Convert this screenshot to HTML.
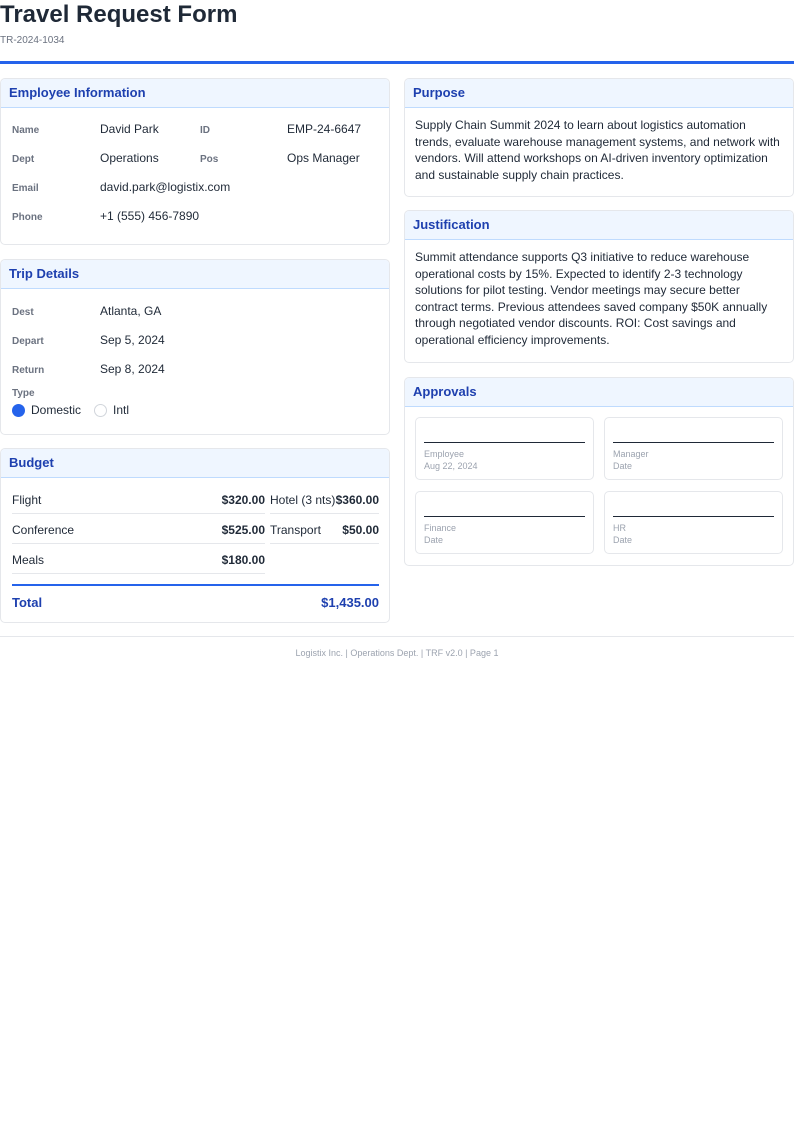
<!DOCTYPE html>
<html><head><meta charset="utf-8"><style>
*{box-sizing:border-box;margin:0;padding:0}
body{width:794px;height:1123px;background:#fff;font-family:"Liberation Sans",Arial,sans-serif;color:#1f2937;position:relative}
.abs{position:absolute}
h1{position:absolute;left:0;top:1px;font-size:24px;font-weight:bold;color:#1f2937}
.sub{left:0;top:35px;font-size:10px;color:#6b7280}
.rule{left:0;top:61px;width:794px;height:3px;background:#2563eb}
.card{position:absolute;border:1px solid #e5e7eb;border-radius:5px;background:#fff;overflow:hidden}
.hd{height:29px;background:#eff6ff;border-bottom:1px solid #bfdbfe;color:#1e40af;font-weight:bold;font-size:13px;padding:6px 0 0 8px}
.lb{position:absolute;font-size:10px;font-weight:bold;color:#6b7280}
.v{position:absolute;font-size:12px;color:#1f2937}
.txt{padding:9px 10px 0 10px;font-size:12px;line-height:16.6px}
.br{position:absolute;height:1px;background:#e5e7eb}
.b{position:absolute;font-size:12px;font-weight:bold;text-align:right}
.sig{position:absolute;width:179px;height:63px;border:1px solid #e5e7eb;border-radius:5px}
.sig .ln{position:absolute;left:8px;right:8px;top:24px;height:1px;background:#1f2937}
.sig .t{position:absolute;left:8px;top:30px;font-size:9px;line-height:12px;color:#9ca3af}
</style></head><body>
<h1>Travel Request Form</h1>
<div class="abs sub">TR-2024-1034</div>
<div class="abs rule"></div>

<div class="card" style="left:0px;top:78px;width:390px;height:167px">
<div class="hd">Employee Information</div>
<div class="lb" style="left:11px;top:46px">Name</div><div class="v" style="left:99px;top:43px">David Park</div>
<div class="lb" style="left:199px;top:46px">ID</div><div class="v" style="left:286px;top:43px">EMP-24-6647</div>
<div class="lb" style="left:11px;top:75px">Dept</div><div class="v" style="left:99px;top:72px">Operations</div>
<div class="lb" style="left:199px;top:75px">Pos</div><div class="v" style="left:286px;top:72px">Ops Manager</div>
<div class="lb" style="left:11px;top:104px">Email</div><div class="v" style="left:99px;top:101px">david.park@logistix.com</div>
<div class="lb" style="left:11px;top:133px">Phone</div><div class="v" style="left:99px;top:130px">+1 (555) 456-7890</div>
</div>

<div class="card" style="left:0px;top:259px;width:390px;height:176px">
<div class="hd">Trip Details</div>
<div class="lb" style="left:11px;top:47px">Dest</div><div class="v" style="left:99px;top:44px">Atlanta, GA</div>
<div class="lb" style="left:11px;top:76px">Depart</div><div class="v" style="left:99px;top:73px">Sep 5, 2024</div>
<div class="lb" style="left:11px;top:105px">Return</div><div class="v" style="left:99px;top:102px">Sep 8, 2024</div>
<div class="lb" style="left:11px;top:128px">Type</div>
<div class="abs" style="left:11px;top:144px;width:13px;height:13px;border-radius:50%;background:#2563eb"></div>
<div class="v" style="left:30px;top:143px">Domestic</div>
<div class="abs" style="left:93px;top:144px;width:13px;height:13px;border-radius:50%;border:1.5px solid #d1d5db"></div>
<div class="v" style="left:112px;top:143px">Intl</div>
</div>

<div class="card" style="left:0px;top:448px;width:390px;height:175px">
<div class="hd">Budget</div>
<div class="v" style="left:11px;top:44px">Flight</div><div class="b" style="left:150px;width:114px;top:44px">$320.00</div>
<div class="v" style="left:269px;top:44px">Hotel (3 nts)</div><div class="b" style="left:300px;width:78px;top:44px">$360.00</div>
<div class="br" style="left:11px;width:253px;top:64px"></div><div class="br" style="left:269px;width:109px;top:64px"></div>
<div class="v" style="left:11px;top:74px">Conference</div><div class="b" style="left:150px;width:114px;top:74px">$525.00</div>
<div class="v" style="left:269px;top:74px">Transport</div><div class="b" style="left:300px;width:78px;top:74px">$50.00</div>
<div class="br" style="left:11px;width:253px;top:94px"></div><div class="br" style="left:269px;width:109px;top:94px"></div>
<div class="v" style="left:11px;top:104px">Meals</div><div class="b" style="left:150px;width:114px;top:104px">$180.00</div>
<div class="br" style="left:11px;width:253px;top:124px"></div>
<div class="abs" style="left:11px;width:367px;top:135px;height:2px;background:#2563eb"></div>
<div class="abs" style="left:11px;top:146px;font-size:13px;font-weight:bold;color:#1e40af">Total</div>
<div class="abs" style="left:250px;width:128px;text-align:right;top:146px;font-size:13px;font-weight:bold;color:#1e40af">$1,435.00</div>
</div>

<div class="card" style="left:404px;top:78px;width:390px;height:119px">
<div class="hd">Purpose</div>
<div class="txt">Supply Chain Summit 2024 to learn about logistics automation trends, evaluate warehouse management systems, and network with vendors. Will attend workshops on AI-driven inventory optimization and sustainable supply chain practices.</div>
</div>

<div class="card" style="left:404px;top:210px;width:390px;height:153px">
<div class="hd">Justification</div>
<div class="txt">Summit attendance supports Q3 initiative to reduce warehouse operational costs by 15%. Expected to identify 2-3 technology solutions for pilot testing. Vendor meetings may secure better contract terms. Previous attendees saved company $50K annually through negotiated vendor discounts. ROI: Cost savings and operational efficiency improvements.</div>
</div>

<div class="card" style="left:404px;top:377px;width:390px;height:189px">
<div class="hd">Approvals</div>
<div class="sig" style="left:10px;top:39px"><div class="ln"></div><div class="t">Employee<br>Aug 22, 2024</div></div>
<div class="sig" style="left:199px;top:39px"><div class="ln"></div><div class="t">Manager<br>Date</div></div>
<div class="sig" style="left:10px;top:113px"><div class="ln"></div><div class="t">Finance<br>Date</div></div>
<div class="sig" style="left:199px;top:113px"><div class="ln"></div><div class="t">HR<br>Date</div></div>
</div>

<div class="abs" style="left:0;top:636px;width:794px;height:1px;background:#e5e7eb"></div>
<div class="abs" style="left:0;top:648px;width:794px;text-align:center;font-size:9px;color:#9ca3af">Logistix Inc. | Operations Dept. | TRF v2.0 | Page 1</div>
</body></html>
